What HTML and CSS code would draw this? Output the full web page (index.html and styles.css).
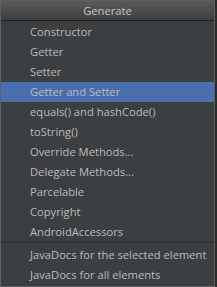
FILE: index.html
```html
<!DOCTYPE html>
<html>
<head>
<meta charset="utf-8">
<link rel="stylesheet" href="styles.css">
</head>
<body>
<div class="popup">
  <div class="header">Generate</div>
  <ul class="list">
    <li class="item">Constructor</li>
    <li class="item">Getter</li>
    <li class="item">Setter</li>
    <li class="item selected">Getter and Setter</li>
    <li class="item">equals() and hashCode()</li>
    <li class="item">toString()</li>
    <li class="item">Override Methods...</li>
    <li class="item">Delegate Methods...</li>
    <li class="item">Parcelable</li>
    <li class="item">Copyright</li>
    <li class="item">AndroidAccessors</li>
  </ul>
  <ul class="list sep">
    <li class="item">JavaDocs for the selected element</li>
    <li class="item">JavaDocs for all elements</li>
  </ul>
</div>
</body>
</html>
```
FILE: styles.css
```css
html, body {
  margin: 0;
  padding: 0;
  background: #2b2b2b;
}
body {
  width: 217px;
  height: 287px;
  overflow: hidden;
  font-family: "Open Sans", "Liberation Sans", sans-serif;
  font-size: 11.2px;
}
.popup {
  width: 213px;
  height: 285px;
  box-sizing: content-box;
  border: 1px solid #5d6062;
  background: #3c3f41;
  display: flex;
  flex-direction: column;
}
.header {
  height: 19px;
  line-height: 19px;
  text-align: center;
  color: #c8c8c8;
  background: linear-gradient(#595959, #3f3f3f);
  border-bottom: 1px solid #1f1f1f;
}
.list {
  list-style: none;
  margin: 0;
  padding: 1px 0 0 0;
}
.sep {
  border-top: 1px solid #2e3032;
  padding-top: 2px;
}
.item {
  height: 20px;
  line-height: 20px;
  padding-left: 29px;
  color: #bbbbbb;
  white-space: nowrap;
}
.selected {
  background: #4b6eaf;
}
```
